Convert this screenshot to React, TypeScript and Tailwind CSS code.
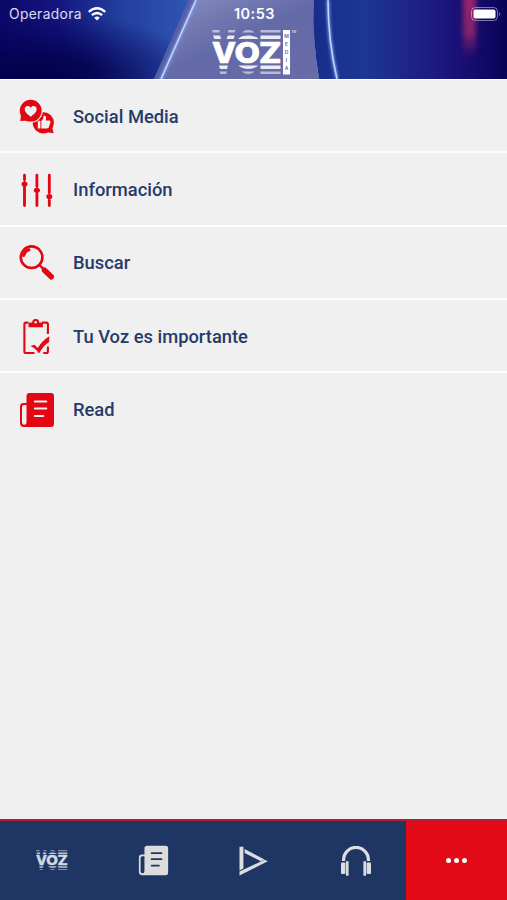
import React from 'react';

interface IconProps {
  className?: string;
}

function SocialIcon({ className }: IconProps) {
  return (
    <svg viewBox="0 0 36 36" className={className}>
      <circle cx="24.3" cy="23.8" r="10.6" fill="#e30613" />
      <path d="M32.5 26l2.2 8.3-8.5-1.3z" fill="#e30613" />
      <circle cx="11.8" cy="11.8" r="12" fill="#f0f0f0" />
      <circle cx="11.7" cy="11.7" r="10.9" fill="#e30613" />
      <path d="M2.2 14.5L1.3 22l8.5-.6z" fill="#e30613" />
      <path d="M11.7 17.7c-3.6-2.7-6-4.7-6-7.4 0-3.7 4.5-4.4 6-1.5 1.5-2.9 6-2.2 6 1.5 0 2.7-2.4 4.7-6 7.4z" fill="#f0f0f0" />
      <path d="M18.8 21.7h2.6v7.7h-2.6zM22.3 22c1.8-1.2 2-2.8 2.2-5.2 2.5-.4 3.2 1.5 2.2 4.7h3.5c1.4 0 1.6 1.3 1 2.5l-1.3 4.1c-.4 1-1 1.3-2 1.3h-5.6z" fill="#f0f0f0" />
    </svg>
  );
}

function SlidersIcon({ className }: IconProps) {
  return (
    <svg viewBox="0 0 36 36" className={className} fill="none" stroke="#e30613" strokeLinecap="round">
      <path d="M5.5 3.2v4.3M5.5 15.5v18M17.9 3.2v11M17.9 22v11.5M30.3 3.2v17.3M30.3 28.5v5" strokeWidth="2.8" />
      <path d="M5.5 5v26M17.9 5v26M30.3 5v26" strokeWidth="1.6" />
      <g fill="#e30613" stroke="none">
        <ellipse cx="5.5" cy="12" rx="3" ry="2.6" />
        <ellipse cx="17.9" cy="18.3" rx="3" ry="2.6" />
        <ellipse cx="30.3" cy="24.5" rx="3" ry="2.6" />
      </g>
    </svg>
  );
}

function SearchIcon({ className }: IconProps) {
  return (
    <svg viewBox="0 0 36 36" className={className} fill="none" stroke="#e30613">
      <circle cx="12.6" cy="12.2" r="10.8" strokeWidth="2.6" />
      <path d="M4.6 10.5c.8-3 2.5-4.8 5.4-5.8" strokeWidth="3" strokeLinecap="round" />
      <path d="M20.3 19.9l4.5 4.5" strokeWidth="2.2" />
      <path d="M25.5 25.2l6.8 6.6" strokeWidth="5.4" strokeLinecap="round" />
    </svg>
  );
}

function ClipboardIcon({ className }: IconProps) {
  return (
    <svg viewBox="0 0 36 36" className={className}>
      <path
        d="M9.5 3.6H7Q5.400 3.600 5.400 5.200v27.200q0 1.600 1.600 1.600h8.500M23 3.600h4.300q1.600 0 1.600 1.600V15M28.900 27.500v4.900q0 1.600-1.600 1.600h-3"
        fill="none"
        stroke="#e30613"
        strokeWidth="2.1"
      />
      <path d="M9.500 8.200V4.800q0-1.200 1.200-1.200h2.500a3.500 3.500 0 0 1 7 0h2.500q1.200 0 1.200 1.200v3.400z" fill="#e30613" />
      <circle cx="16.7" cy="3.3" r="1.3" fill="#f0f0f0" />
      <path d="M11.5 27l4-1.200 3.300 3.200c3-4.600 6.300-8.600 11.500-11.700l-.2 5.800c-4.200 2.900-7.200 6.200-10.100 11.500-2-3.300-4.500-6-8.500-7.600z" fill="#e30613" />
    </svg>
  );
}

interface NewsIconProps {
  className: string;
  lines: string;
}

function NewsIcon({ className, lines }: NewsIconProps) {
  return (
    <svg viewBox="0 0 36 36" className={className}>
      <path
        fill="currentColor"
        fillRule="evenodd"
        d="M10.500 1H32a3 3 0 0 1 3 3v28a3 3 0 0 1-3 3H5a4 4 0 0 1-4-4V14.500a3.500 3.500 0 0 1 3.500-3.500H7.500V4a3 3 0 0 1 3-3zM7.500 13H5a2 2 0 0 0-2 2V30.500a2.250 2.250 0 0 0 4.500 0z"
      />
      <path d="M15.800 9.500h11.500M15.800 16.500h11.500M15.800 23.900h8.500" fill="none" stroke={lines} strokeWidth="2" strokeLinecap="round" />
    </svg>
  );
}

function PlayIcon({ className }: IconProps) {
  return (
    <svg viewBox="0 0 30 30" className={className} fill="#dcdde1">
      <path d="M1.500 .8h3.900V22.600L1.500 24.400z" />
      <path d="M6.600 3L26.500 13.400l-3.700 1.800L6.600 6.900z" />
      <path d="M23.300 15.200l3.500-1.500 3 1.500L1.500 29.500V25.600z" />
    </svg>
  );
}

function HeadphonesIcon({ className }: IconProps) {
  return (
    <svg viewBox="0 0 30 30" className={className}>
      <path d="M2.600 15V13.800a12.400 12.400 0 0 1 24.800 0V15" fill="none" stroke="#dcdde1" strokeWidth="3.2" />
      <g fill="#dcdde1">
        <rect x="0" y="16.5" width="4.4" height="11.5" rx="1" />
        <rect x="4.9" y="15.2" width="2.7" height="14.5" rx=".5" />
        <rect x="22.4" y="15.2" width="2.7" height="14.5" rx=".5" />
        <rect x="25.6" y="16.5" width="4.4" height="11.5" rx="1" />
      </g>
    </svg>
  );
}

interface VozMarkProps {
  color: string;
}

function VozMark({ color }: VozMarkProps) {
  return (
    <g fill={color}>
      <g opacity=".55">
        <path d="M0 0h7.500l.4 2.500H.8zM16.500 0h7l-1 2.500h-6.700zM30 2.500c3-3.300 9.500-3.300 12.500 0zM48.500 0h20v2.500h-20z" />
        <path d="M7.500 41.500h7.500l-1 2.500H8.500zM30 41.500h12.500c-3 3.300-9.500 3.300-12.500 0zM48.500 41.500h20V44h-20z" />
      </g>
      <g opacity=".88">
        <path d="M1 5.500h7l1.200 3.500H2.300zM15.800 5.500h7L21.500 9h-7zM26 9c4-4.600 16.500-4.600 20.500 0zM48.500 5.500h20V9h-20z" />
        <path d="M7 35.500h9l-1 3.500H8zM26.500 35.500h19.500c-4 4.600-15.500 4.600-19.500 0zM48.500 35.500h20V39h-20z" />
      </g>
      <g fontFamily="Inter, sans-serif" fontSize="28.5" fontWeight="800" stroke={color} strokeWidth=".7">
        <text x="0" y="32.7" textLength="24" lengthAdjust="spacingAndGlyphs">V</text>
        <text x="22.5" y="32.7" textLength="25.5" lengthAdjust="spacingAndGlyphs">O</text>
        <text x="47" y="32.7" textLength="22.5" lengthAdjust="spacingAndGlyphs">Z</text>
      </g>
    </g>
  );
}

function HeaderLogo() {
  return (
    <svg viewBox="0 0 86 46" className="h-[46px] w-[86px]" fill="#fff">
      <VozMark color="#fff" />
      <rect x="71" y="0" width="7" height="44.5" />
      <g fontFamily="Inter, sans-serif" fontSize="5" fontWeight="600" textAnchor="middle" fill="#666a9c">
        {'MEDIA'.split('').map((letter, i) => (
          <text key={letter} x="74.5" y={7.5 + i * 8.2}>{letter}</text>
        ))}
      </g>
      <text x="79.5" y="2.5" fontFamily="Inter, sans-serif" fontSize="3">TM</text>
    </svg>
  );
}

function HeaderBackdrop() {
  return (
    <svg viewBox="0 0 507 79" className="absolute inset-0 h-full w-full" preserveAspectRatio="none">
      <defs>
        <linearGradient id="left" x1="0" y1="0" x2="1" y2="0">
          <stop offset="0" stopColor="#0b0768" />
          <stop offset=".3" stopColor="#141781" />
          <stop offset=".6" stopColor="#223f9d" />
          <stop offset="1" stopColor="#3258b5" />
        </linearGradient>
        <radialGradient id="dark" cx=".2" cy="1" r=".85">
          <stop offset="0" stopColor="#02004a" />
          <stop offset=".35" stopColor="#03014f" stopOpacity=".85" />
          <stop offset="1" stopColor="#06005c" stopOpacity="0" />
        </radialGradient>
        <linearGradient id="glass" x1="0" y1="0" x2="1" y2="1">
          <stop offset="0" stopColor="#8990bf" />
          <stop offset=".5" stopColor="#636aa8" />
          <stop offset="1" stopColor="#696ba6" />
        </linearGradient>
        <linearGradient id="right">
          <stop offset="0" stopColor="#182d89" />
          <stop offset=".25" stopColor="#1d3795" />
          <stop offset=".5" stopColor="#1e2487" />
          <stop offset=".75" stopColor="#1a1076" />
          <stop offset="1" stopColor="#0a0358" />
        </linearGradient>
        <linearGradient id="flare" x1="0" y1="0" x2="0" y2="1">
          <stop offset="0" stopColor="#9b246d" />
          <stop offset=".6" stopColor="#80206d" />
          <stop offset="1" stopColor="#4b1a68" stopOpacity="0" />
        </linearGradient>
        <filter id="soft" x="-100%" width="300%">
          <feGaussianBlur stdDeviation="2.5" />
        </filter>
        <filter id="glow" x="-50%" width="200%">
          <feGaussianBlur stdDeviation="1.5" />
        </filter>
      </defs>
      <rect width="200" height="79" fill="url(#left)" />
      <rect width="200" height="79" fill="url(#dark)" />
      <path d="M189 0H315Q312 38 319 79H154z" fill="url(#glass)" />
      <path d="M189 0h7L161 79h-7z" fill="#555da5" />
      <path d="M314 0H507V79H319Q312 38 314 0z" fill="url(#right)" />
      <rect x="463" y="-5" width="13" height="65" fill="url(#flare)" filter="url(#soft)" />
      <g fill="none">
        <path d="M196 0L161 79M328 0Q328 40 337 79" stroke="#7da0f0" strokeWidth="3" filter="url(#glow)" />
        <path d="M196 0L161 79M328 0Q328 40 337 79" stroke="#c9d4fa" strokeWidth="1.5" />
      </g>
    </svg>
  );
}

function StatusBar() {
  return (
    <div className="relative flex h-7 items-center justify-between pl-[9px] pr-[7px] font-['Inter',sans-serif] text-white">
      <div className="flex w-40 items-center gap-[6px]">
        <span className="text-[13.8px] tracking-[0.35px] text-white/85">Operadora</span>
        <svg viewBox="0 0 18 14" className="-mt-px h-[14px] w-[18px]" fill="none" stroke="#fff" strokeWidth="2.3">
          <path d="M.8 4.800q8.200-7.200 16.400 0M3.800 8.200q5.200-4.400 10.400 0" />
          <path d="M6.200 10.700q2.800-2.400 5.600 0L9 13.500z" fill="#fff" stroke="none" />
        </svg>
      </div>
      <span className="text-[14.5px] font-semibold tracking-[0.5px]">10:53</span>
      <div className="flex w-40 justify-end">
        <svg viewBox="0 0 31 14" className="-mr-[2px] -mt-px h-[14px] w-[31px]">
          <rect x=".5" y=".5" width="26" height="13" rx="4" fill="none" stroke="#fff" strokeOpacity=".45" />
          <rect x="2.5" y="2.5" width="22" height="9" rx="2" fill="#fff" />
          <path d="M28 5q2 2 0 4z" fill="#fff" fillOpacity=".5" />
        </svg>
      </div>
    </div>
  );
}

const menuItems = [
  { label: 'Social Media', icon: <SocialIcon className="size-9" /> },
  { label: 'Información', icon: <SlidersIcon className="size-9" /> },
  { label: 'Buscar', icon: <SearchIcon className="size-9" /> },
  { label: 'Tu Voz es importante', icon: <ClipboardIcon className="size-9 overflow-visible" /> },
  { label: 'Read', icon: <NewsIcon className="size-9 text-[#e30613]" lines="#f0f0f0" /> },
];

export default function App() {
  return (
    <div className="flex h-[900px] w-full flex-col overflow-hidden bg-[#f0f0f0]">
      <header className="relative h-[79px] shrink-0">
        <HeaderBackdrop />
        <StatusBar />
        <div className="relative mt-[2px] pl-[212px]">
          <HeaderLogo />
        </div>
      </header>

      {/* Menu */}
      <main className="flex-1 border-t border-white">
        {menuItems.map(item => (
          <div
            key={item.label}
            className="flex h-[73.3px] items-center border-b-2 border-[#fcfcfc] pl-[19px] pt-[2px] last:border-transparent"
          >
            {item.icon}
            <span className="ml-[18px] whitespace-nowrap font-['Roboto',sans-serif] text-[18.35px] font-medium text-[#263b6b]">
              {item.label}
            </span>
          </div>
        ))}
      </main>

      {/* Tab bar */}
      <nav className="grid h-[81px] shrink-0 grid-cols-5 border-t-2 border-[#b51c35] bg-[#1f3664]">
        <div className="flex items-center justify-center">
          <svg viewBox="0 0 70 46" className="ml-[2px] h-[21px] w-[32px]">
            <VozMark color="#d3d8e2" />
          </svg>
        </div>
        <div className="flex items-center justify-center">
          <NewsIcon className="ml-[2px] size-[31px] text-[#dcdcdc]" lines="#1f3664" />
        </div>
        <div className="flex items-center justify-center">
          <PlayIcon className="size-[30px]" />
        </div>
        <div className="flex items-center justify-center">
          <HeadphonesIcon className="ml-[2px] size-[30px]" />
        </div>
        <div className="flex items-center justify-center gap-[2.5px] bg-[#e20a16]">
          <span className="size-[5.5px] rounded-full bg-white" />
          <span className="size-[5.5px] rounded-full bg-white" />
          <span className="size-[5.5px] rounded-full bg-white" />
        </div>
      </nav>
    </div>
  );
}
